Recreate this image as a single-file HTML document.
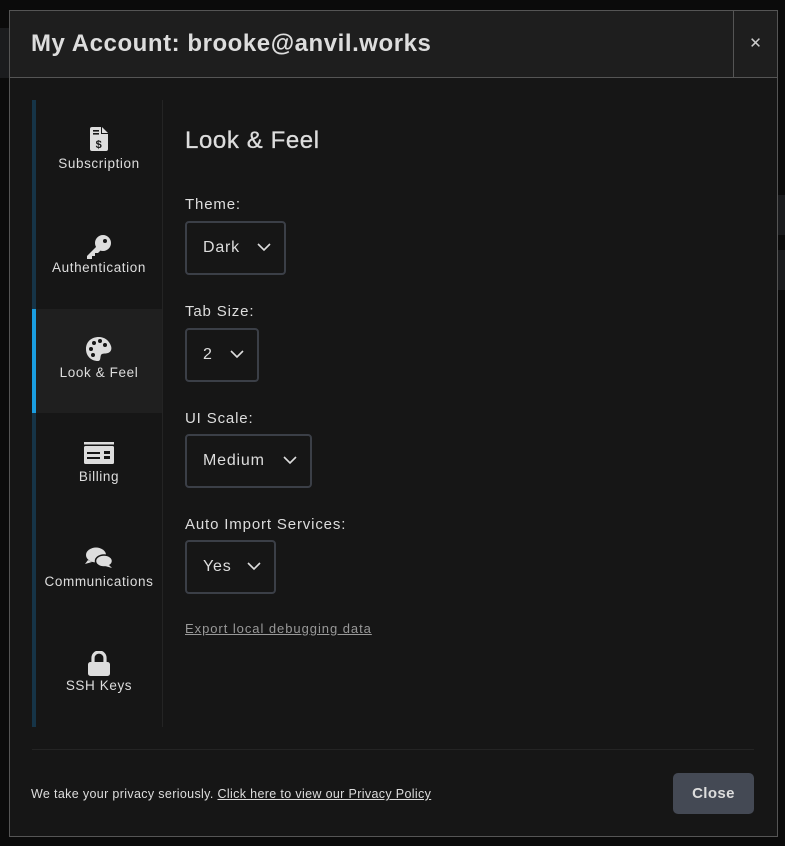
<!DOCTYPE html>
<html><head><style>
*{box-sizing:border-box;margin:0;padding:0}
body{width:785px;height:846px;background:#0b0b0b;font-family:"Liberation Sans",sans-serif;color:#ddd;position:relative;overflow:hidden}
.bgl{position:absolute;background:#1b1c1e}
.modal{position:absolute;left:9px;top:10px;width:769px;height:827px;background:#161616;border:1px solid #555}
.hdr{position:absolute;left:0;top:0;width:767px;height:67px;background:#1e1e1e;border-bottom:1px solid #555}
.hdr h1{position:absolute;left:21px;top:19px;font-size:24px;font-weight:bold;color:#ddd;letter-spacing:0.55px;white-space:nowrap}
.x{position:absolute;left:723px;top:0;width:44px;height:66px;border-left:1px solid #555;color:#ccc;font-size:15px;text-align:center;line-height:66px}
.side{position:absolute;left:22px;top:89px;width:131px;height:627px;border-right:1px solid #242424}
.bar{position:absolute;left:0;top:0;width:4px;height:627px;background:#163447}
.item{position:absolute;left:4px;width:126px;height:104px;text-align:center;font-size:13.5px;letter-spacing:0.6px;color:#ddd;white-space:nowrap}
.item svg{position:absolute;left:50%;transform:translateX(-50%)}
.item span{position:absolute;left:-10px;right:-10px;top:56px}
.act{background:#1f1f1f}
.actbar{position:absolute;left:0;top:209px;width:4px;height:104px;background:#1a9de0}
h2{position:absolute;left:175px;top:116px;font-size:24px;font-weight:normal;letter-spacing:0.6px;color:#ddd;white-space:nowrap;-webkit-text-stroke:0.3px #ddd}
.lbl{position:absolute;left:175px;font-size:15px;letter-spacing:0.85px;color:#ddd;white-space:nowrap}
.sel{position:absolute;left:175px;height:54px;border:2px solid #3b3f47;border-radius:4px;font-size:16px;letter-spacing:0.8px;color:#ddd;line-height:50px;padding-left:16px}
.sel svg{position:absolute;top:20px}
.link{position:absolute;left:175px;top:610px;font-size:13px;letter-spacing:0.95px;color:#999;text-decoration:underline;white-space:nowrap}
.sep{position:absolute;left:22px;top:738px;width:722px;height:1px;background:#242424}
.foot{position:absolute;left:21px;top:776px;font-size:12.5px;letter-spacing:0.35px;color:#ddd;white-space:nowrap}
.btn{position:absolute;left:663px;top:762px;width:81px;height:41px;background:#444954;border-radius:5px;color:#ddd;font-weight:bold;font-size:15px;letter-spacing:0.4px;text-align:center;line-height:41px}
</style></head><body>
<div class="bgl" style="left:0;top:28px;width:10px;height:50px"></div>
<div class="bgl" style="left:778px;top:195px;width:7px;height:40px;background:#1a1b1d"></div>
<div class="bgl" style="left:778px;top:250px;width:7px;height:40px;background:#1a1b1d"></div>
<div class="modal">
<div class="hdr"><h1>My Account: brooke@anvil.works</h1><div class="x">✕</div></div>
<div class="side">
<div class="bar"></div>
<div class="item" style="top:0"><svg style="top:27px" width="18" height="24" viewBox="0 0 18 24"><path d="M0 2Q0 0 2 0H11V7H18V22Q18 24 16 24H2Q0 24 0 22Z M12 0L18 6H12Z" fill="#ddd"/><rect x="3" y="3" width="6" height="1.6" fill="#161616"/><rect x="3" y="6" width="6" height="1.6" fill="#161616"/><text x="9" y="21" font-size="11" font-weight="bold" text-anchor="middle" fill="#161616" font-family="Liberation Sans">$</text></svg><span>Subscription</span></div>
<div class="item" style="top:104px"><svg style="top:30px" width="26" height="26" viewBox="0 0 26 26"><circle cx="17" cy="9" r="8" fill="#ddd"/><circle cx="19" cy="7" r="2" fill="#161616"/><path d="M11 12L1 22V25H6V22H9V19H12L15 16Z" fill="#ddd"/></svg><span>Authentication</span></div>
<div class="actbar"></div>
<div class="item act" style="top:209px"><svg style="top:28px" width="26" height="24" viewBox="0 0 26 24"><path d="M13 0C5 0 0 5 0 12C0 19 5 24 12 24C15 24 14 20 15 18C16 16 19 17 22 16C25 15 26 12 25 9C23 3 18 0 13 0Z" fill="#ddd"/><circle cx="5" cy="12" r="2" fill="#161616"/><circle cx="8" cy="6" r="2" fill="#161616"/><circle cx="14" cy="4" r="2" fill="#161616"/><circle cx="19" cy="8" r="2" fill="#161616"/><circle cx="7" cy="18" r="2" fill="#161616"/></svg><span>Look &amp; Feel</span></div>
<div class="item" style="top:313px"><svg style="top:29px" width="30" height="22" viewBox="0 0 30 22"><rect x="0" y="0" width="30" height="2.5" fill="#ddd"/><rect x="0" y="4" width="30" height="18" rx="1.5" fill="#ddd"/><rect x="3" y="10" width="13" height="2" fill="#161616"/><rect x="3" y="15" width="13" height="2" fill="#161616"/><rect x="20" y="9" width="6" height="3" fill="#161616"/><rect x="20" y="14" width="6" height="3" fill="#161616"/></svg><span>Billing</span></div>
<div class="item" style="top:418px"><svg style="top:29px" width="28" height="22" viewBox="0 0 28 22"><ellipse cx="11" cy="8" rx="10" ry="7.5" fill="#ddd"/><path d="M3 13L0 17L7 15Z" fill="#ddd"/><ellipse cx="19" cy="14" rx="8.5" ry="6" fill="#ddd" stroke="#161616" stroke-width="1.5"/><path d="M24 18L27 21L20 19Z" fill="#ddd"/></svg><span>Communications</span></div>
<div class="item" style="top:522px"><svg style="top:29px" width="22" height="25" viewBox="0 0 22 25"><path d="M5 11V7A6 6 0 0 1 17 7V11" stroke="#ddd" stroke-width="3.2" fill="none"/><rect x="0" y="11" width="22" height="14" rx="2.5" fill="#ddd"/></svg><span>SSH Keys</span></div>
</div>
<h2>Look &amp; Feel</h2>
<div class="lbl" style="top:185px">Theme:</div>
<div class="sel" style="top:210px;width:101px">Dark<svg style="left:70px" width="14" height="9" viewBox="0 0 14 9"><path d="M1 1L7 7L13 1" stroke="#ddd" stroke-width="1.6" fill="none"/></svg></div>
<div class="lbl" style="top:292px">Tab Size:</div>
<div class="sel" style="top:317px;width:74px">2<svg style="left:43px" width="14" height="9" viewBox="0 0 14 9"><path d="M1 1L7 7L13 1" stroke="#ddd" stroke-width="1.6" fill="none"/></svg></div>
<div class="lbl" style="top:399px">UI Scale:</div>
<div class="sel" style="top:423px;width:127px">Medium<svg style="left:96px" width="14" height="9" viewBox="0 0 14 9"><path d="M1 1L7 7L13 1" stroke="#ddd" stroke-width="1.6" fill="none"/></svg></div>
<div class="lbl" style="top:505px">Auto Import Services:</div>
<div class="sel" style="top:529px;width:91px">Yes<svg style="left:60px" width="14" height="9" viewBox="0 0 14 9"><path d="M1 1L7 7L13 1" stroke="#ddd" stroke-width="1.6" fill="none"/></svg></div>
<div class="link">Export local debugging data</div>
<div class="sep"></div>
<div class="foot">We take your privacy seriously. <u>Click here to view our Privacy Policy</u></div>
<div class="btn">Close</div>
</div>
</body></html>
